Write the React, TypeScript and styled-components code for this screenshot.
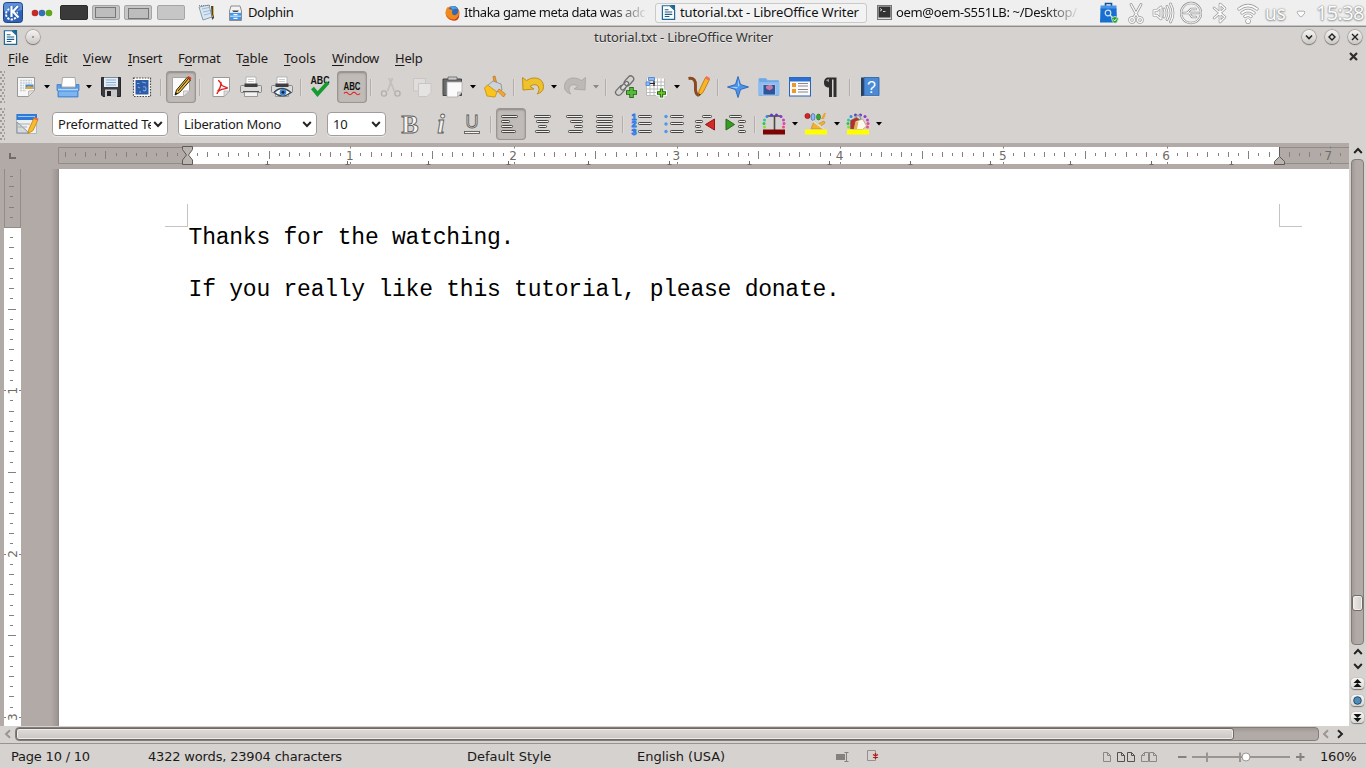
import React from "react";
import styled, { createGlobalStyle, css } from "styled-components";

const sans = `"Noto Sans", "Open Sans", sans-serif`;

const Global = createGlobalStyle`
  * { box-sizing: border-box; }
  body { margin: 0; overflow: hidden; background: #d6d2cf; font: 13px ${sans}; color: #1c1a19; }
  svg { display: block; flex: none; }
`;

const Screen = styled.div`
  width: 1366px;
  height: 768px;
  display: flex;
  flex-direction: column;
  overflow: hidden;
`;

/* ---------- desktop panel ---------- */
const Panel = styled.header`
  height: 27px;
  flex: none;
  display: flex;
  align-items: center;
  padding: 0 0 1px 3px;
  background: #efefef;
  border-bottom: 1px solid #8e8c8a;
  box-shadow: inset 0 -1px #c6c5c4;
`;
const PanelItem = styled.div<{ $gap?: number; $w: number }>`
  flex: none;
  display: flex;
  align-items: center;
  justify-content: center;
  height: 25px;
  width: ${(p) => p.$w}px;
  margin-left: ${(p) => p.$gap ?? 0}px;
`;
const Desk = styled.div<{ $tone?: string; $gap?: number }>`
  flex: none;
  width: 28px;
  height: 15px;
  margin-left: ${(p) => p.$gap ?? 4}px;
  border-radius: 2px;
  border: 1px solid ${(p) => (p.$tone ? "#2c2c2c" : "#a5a5a5")};
  background: ${(p) => p.$tone ?? "#c6c6c6"};
  padding: 1px 2px;
`;
const DeskWindow = styled.div<{ $low?: boolean }>`
  height: 11px;
  width: 21px;
  margin-top: ${(p) => (p.$low ? 1 : 0)}px;
  margin-left: ${(p) => (p.$low ? 1 : 0)}px;
  border: 1px solid #777;
  background: #bdbdbd;
`;
const PanelText = styled.span<{ $w: number; $gap: number; $ls?: number; $fade?: boolean }>`
  flex: none;
  width: ${(p) => p.$w}px;
  margin-left: ${(p) => p.$gap}px;
  margin-top: -1px;
  overflow: hidden;
  white-space: nowrap;
  font-size: 13px;
  line-height: 20px;
  color: #111;
  letter-spacing: ${(p) => p.$ls ?? 0}px;
  ${(p) =>
    p.$fade &&
    css`
      mask-image: linear-gradient(90deg, #000 82%, transparent 102%);
    `}
`;
const ActiveTask = styled.div`
  flex: none;
  display: flex;
  align-items: center;
  width: 212px;
  height: 20px;
  margin-left: 10px;
  padding-left: 5px;
  border: 1px solid #c9c9c9;
  border-radius: 3px;
  background: #f3f3f3;
`;
const TrayText = styled.span<{ $w: number; $size: number; $gap: number; $ls?: number }>`
  flex: none;
  width: ${(p) => p.$w}px;
  margin-left: ${(p) => p.$gap}px;
  font-size: ${(p) => p.$size}px;
  line-height: 24px;
  letter-spacing: ${(p) => p.$ls ?? 0}px;
  white-space: nowrap;
  color: #fdfdfd;
  text-shadow: 0 0 1px #888, 0 0 2px #999, 0 1px 2px #999;
`;

/* ---------- title and menu ---------- */
const TitleBar = styled.div`
  height: 20px;
  flex: none;
  display: grid;
  grid-template-columns: 60px 1fr 60px;
  align-items: center;
  padding: 0 4px 0 3px;
`;
const TitleIcons = styled.div<{ $gap: number; $end?: boolean }>`
  display: flex;
  align-items: center;
  gap: ${(p) => p.$gap}px;
  justify-content: ${(p) => (p.$end ? "flex-end" : "flex-start")};
`;
const Title = styled.div`
  text-align: center;
  padding-left: 2px;
  color: #333;
  text-shadow: 0 1px #eee;
  letter-spacing: -0.14px;
  line-height: 18px;
`;
const RoundButton = styled.div`
  width: 14px;
  height: 14px;
  flex: none;
  border-radius: 50%;
  display: grid;
  place-items: center;
  background: linear-gradient(#f5f4f3, #cbc7c4);
  box-shadow: 0 0 1px 0.5px #827e7b, 0 1px 1px #76726f;
`;
const MenuBar = styled.nav`
  height: 22px;
  flex: none;
  display: flex;
  align-items: center;
  gap: 16px;
  padding: 0 8px 1px 8px;
`;
const MenuItem = styled.span<{ $w: number; $ls?: number }>`
  width: ${(p) => p.$w}px;
  flex: none;
  white-space: nowrap;
  line-height: 20px;
  letter-spacing: ${(p) => p.$ls ?? 0}px;
  u { text-underline-offset: 2px; }
`;
const Spacer = styled.div`
  flex: 1;
`;

/* ---------- toolbars ---------- */
const ToolRow = styled.div<{ $h: number }>`
  height: ${(p) => p.$h}px;
  flex: none;
  display: flex;
  align-items: center;
`;
const Grip = styled.div`
  width: 5px;
  height: 32px;
  margin-right: 7px;
  background: radial-gradient(circle at 1px 1px, #a09b98 0.8px, transparent 1.1px) 0 0 / 4px 6px,
    radial-gradient(circle at 1px 1px, #a09b98 0.8px, transparent 1.1px) 2px 3px / 4px 6px;
`;
const Tool = styled.div<{ $gap?: number; $on?: boolean }>`
  flex: none;
  width: 28px;
  height: 30px;
  margin-left: ${(p) => p.$gap ?? 0}px;
  display: grid;
  place-items: center;
  border-radius: 3px;
  ${(p) =>
    p.$on &&
    css`
      background: #c0bbb7;
      box-shadow: 0 0 0 1px #9a9592, inset 0 1px 2px #8d8885;
    `}
`;
const Sep = styled.div<{ $gap?: number }>`
  flex: none;
  width: 2px;
  height: 17px;
  margin-left: ${(p) => p.$gap ?? 4}px;
  border-left: 1px solid #b3aeab;
  border-right: 1px solid #dedbd9;
`;
const DropBox = styled.div`
  flex: none;
  width: 14px;
  display: grid;
  place-items: center;
`;
const Combo = styled.div<{ $w: number; $gap: number }>`
  flex: none;
  width: ${(p) => p.$w}px;
  margin-left: ${(p) => p.$gap}px;
  height: 24px;
  display: flex;
  align-items: center;
  justify-content: space-between;
  padding: 0 4px 0 5px;
  background: #fff;
  border: 1px solid #a29d9a;
  border-radius: 4px;
  box-shadow: 0 1px #e6e4e2;
`;
const ComboText = styled.span<{ $ls?: number }>`
  flex: 1;
  overflow: hidden;
  white-space: nowrap;
  line-height: 20px;
  margin-right: 2px;
  letter-spacing: ${(p) => p.$ls ?? 0}px;
`;

/* ---------- work area ---------- */
const Work = styled.main`
  flex: none;
  height: 583px;
  display: flex;
`;
const Canvas = styled.div`
  width: 1349px;
  display: flex;
  flex-direction: column;
  background: #b2aaa6;
`;
const RulerRow = styled.div`
  height: 26px;
  flex: none;
`;
const DocRow = styled.div`
  flex: 1;
  display: flex;
`;
const Desktop = styled.div`
  width: 37px;
  background: linear-gradient(90deg, transparent 30px, #9b9490 37px);
`;
const Page = styled.article`
  position: relative;
  flex: 1;
  border-left: 1px solid #918b87;
  background: #fff;
  padding: 56px 0 0 129.6px;
`;
const Line = styled.p`
  margin: 0;
  height: 26px;
  font: 23px/26px "Liberation Mono", monospace;
  letter-spacing: -0.24px;
  color: #000;
  white-space: pre;
`;
const Corner = styled.i<{ $x: number; $side: "left" | "right" }>`
  position: absolute;
  left: ${(p) => p.$x}px;
  top: 35px;
  width: 23px;
  height: 23px;
  border-bottom: 1px solid #c4c4c4;
  border-${(p) => p.$side}: 1px solid #c4c4c4;
`;
const VScroll = styled.aside`
  width: 17px;
  display: flex;
  flex-direction: column;
  align-items: center;
  background: #d6d2cf;
`;
const VTrack = styled.div`
  width: 13px;
  height: 486px;
  flex: none;
  border-radius: 4px;
  border: 1px solid #827d79;
  background: linear-gradient(90deg, #a19a96, #b2aaa6 40%);
  padding-top: 435px;
`;
const VThumb = styled.div`
  width: 11px;
  height: 16px;
  border-radius: 3px;
  border: 1px solid #716c69;
  background: linear-gradient(90deg, #eceae8, #d2cecb);
  box-shadow: inset 0 0 0 1px #f2f1f0;
`;
const PillButton = styled.div<{ $gap: number }>`
  width: 13px;
  height: 11px;
  flex: none;
  margin-top: ${(p) => p.$gap}px;
  display: grid;
  place-items: center;
  border-radius: 4px;
  background: linear-gradient(#f7f6f5, #d8d5d2);
  box-shadow: 0 1px 1px #77726f, 0 0 1px #77726f;
`;
const ArrowSlot = styled.div<{ $w?: number; $h?: number }>`
  width: ${(p) => p.$w ?? 13}px;
  height: ${(p) => p.$h ?? 14}px;
  flex: none;
  display: grid;
  place-items: center;
`;
const HScroll = styled.div`
  height: 17px;
  flex: none;
  display: flex;
  align-items: center;
  padding-bottom: 1px;
`;
const HTrack = styled.div`
  width: 1304px;
  height: 14px;
  border-radius: 4px;
  border: 1px solid #827d79;
  background: linear-gradient(#9e9793, #b2aaa6 40%);
`;
const HThumb = styled.div`
  width: 1218px;
  height: 12px;
  border-radius: 3px;
  border: 1px solid #6e6966;
  background: linear-gradient(#dedbd9, #cac6c2);
  box-shadow: inset 0 0 0 1px #efedeb;
`;
const StatusBar = styled.footer`
  flex: none;
  height: 25px;
  display: flex;
  align-items: center;
  border-top: 1px solid #989390;
  padding: 0 0 0 11px;
`;
const StatusText = styled.span<{ $w: number; $ls?: number }>`
  flex: none;
  display: block;
  width: ${(p) => p.$w}px;
  padding-top: 2px;
  white-space: nowrap;
  font-family: "DejaVu Sans", sans-serif;
  line-height: 20px;
  letter-spacing: ${(p) => p.$ls ?? 0}px;
`;
const StatusIcon = styled.div<{ $gap: number }>`
  flex: none;
  margin-left: ${(p) => p.$gap}px;
`;

/* ---------- drawings ---------- */
const Icon = ({ children, size = 24 }: { children: React.ReactNode; size?: number }) => (
  <svg width={size} height={size} viewBox="0 0 24 24" fill="none">
    {children}
  </svg>
);

const Drop = ({ dim }: { dim?: boolean }) => (
  <DropBox>
    <svg width="6" height="4">
      <path d="M0 0h6L3 3.6Z" fill={dim ? "#8d8986" : "#000"} />
    </svg>
  </DropBox>
);

const Chevron = ({ dir, color = "#222", size = 10 }: { dir: "up" | "down" | "left" | "right"; color?: string; size?: number }) => {
  const turn = { down: 0, left: 90, up: 180, right: 270 }[dir];
  return (
    <svg width={size} height={size} viewBox="0 0 10 10">
      <path d="M1.200 3 5 7l3.800-4" transform={`rotate(${turn} 5 5)`} fill="none" stroke={color} strokeWidth="1.900" />
    </svg>
  );
};

const WriterIcon = ({ size = 16 }: { size?: number }) => (
  <svg width={size} height={size} viewBox="0 0 16 16">
    <path d="M1.500.8h8L14.500 5.500v9.800h-13z" fill="#fff" stroke="#1f6a97" strokeWidth="1.300" />
    <path d="M9.500 0H15v6z" fill="#1a6795" />
    <path d="M4 5h4M4 7.500h8M4 10h8M4 12.300h5" stroke="#1d5d88" strokeWidth="1.200" />
  </svg>
);

const Bars = ({ rows }: { rows: [number, number, number][] }) => (
  <>
    {rows.map(([x, y, w], i) => (
      <rect key={i} x={x + 0.5} y={y + 0.5} width={w - 1} height="2" rx="0.8" fill="#f0f0f0" stroke="#484644" strokeWidth="1" />
    ))}
  </>
);

const dotRing = [
  ["#7fe03c", 2.5, 15], ["#2ec44b", 2, 11.5], ["#2fc9a0", 2.5, 8], ["#3b8bd8", 5, 4.5], ["#4f43c9", 9.5, 3],
  ["#6a36c4", 14.5, 3], ["#8a3cc8", 19, 4.5], ["#b94ac5", 21.5, 8], ["#d94aa5", 22, 11.5], ["#ee4b8a", 21.5, 15],
] as const;
const Ring = () => (
  <>
    {dotRing.map(([c, x, y], i) => (
      <circle key={i} cx={x} cy={y} r="1.500" fill={c} />
    ))}
  </>
);

const NewDoc = () => (
  <Icon>
    <path d="M3.500 2.500h17v13l-6 6h-11z" fill="#f7f7f7" stroke="#999" />
    <path d="M14.500 21.500v-5.500l6-.5z" fill="#ddd" stroke="#aaa" strokeWidth=".7" />
    <path d="M6 5.500h12M6 8h12M6 10.500h4M6 13h4M6 15.500h6" stroke="#c5ccd2" strokeWidth="1.300" strokeDasharray="2 .7" />
    <rect x="11.500" y="9.500" width="8" height="4.500" fill="#3c8ed3" />
    <path d="M11.500 14v-1.500l3-1.500 5 1v2z" fill="#e0a63d" />
  </Icon>
);
const OpenIcon = () => (
  <Icon>
    <path d="M5.500 12 6.500 2.500h12.500l1 9.500z" fill="#fff" stroke="#999" strokeWidth=".8" />
    <path d="M1 9.500h4v3.500h15V9.500h3v6h-1V22H2v-6.500H1z" fill="#5c9fe6" stroke="#3f7fc8" strokeWidth=".8" />
    <path d="M2 14.500h20" stroke="#b8d8fa" strokeWidth="1.500" />
    <path d="M3 17h18v4H3z" fill="#7db5f0" />
  </Icon>
);
const SaveIcon = () => (
  <Icon>
    <path d="M2.500 2.500h19v19H4l-1.500-1.500z" fill="#3b3b40" stroke="#26262a" />
    <path d="M5 2.500h14v9.500H5z" fill="#e2ecf7" />
    <path d="M7 5h10M7 7.500h10M7 10h10" stroke="#8aaed8" />
    <path d="M6 14.500h12V22H6z" fill="#c9c9cb" />
    <path d="M8 16h4v5H8z" fill="#222" />
  </Icon>
);
const StampIcon = () => (
  <Icon>
    <rect x="3.500" y="3" width="17" height="18.500" fill="#fff" stroke="#4a4a4a" strokeWidth="1.200" strokeDasharray="1.600 1.200" />
    <rect x="5.500" y="5" width="13" height="14.500" fill="#2c5ba8" />
    <path d="M7 8.500h2.500M12 7l4 1M8 12l2 1M13 12q3-1 3 2t-3 1M9 17h2" stroke="#7ea6e0" strokeWidth="1.200" />
  </Icon>
);
const EditIcon = () => (
  <Icon>
    <path d="M3.500 2.500h17v13l-6 6h-11z" fill="#fbfbfb" stroke="#a5a5a5" />
    <path d="M14.500 21.500v-5.500h6z" fill="#e3e3e3" stroke="#aaa" strokeWidth=".7" />
    <path d="m6 20 1.500-5L18 2.500l3.500 2.500L10.500 17.500z" fill="#f2bb2a" stroke="#222" strokeWidth="1" />
    <path d="M9 16 19.500 3.500" stroke="#222" strokeWidth="1" />
    <path d="M18 2.500 19.500 1l3 2-1 2z" fill="#d8322a" />
    <path d="m6 20 .8-2.800 1.700 1.300z" fill="#111" />
  </Icon>
);
const PdfIcon = () => (
  <Icon>
    <path d="M4 2.500h16.500v13.500L15 21.500H4z" fill="#fdfdfd" stroke="#999" />
    <path d="M15 21.500V16h5.500z" fill="#ddd" stroke="#aaa" strokeWidth=".7" />
    <path d="M9 5.500c2 0 2.500 3 4 5 2 1.500 5.500 1.800 5.500 2.500s-5 .5-8 2.500c-1.500 1-2.500 3-2.500 3.500M12 7c0 4-1 7-3.500 9.500" stroke="#e02222" strokeWidth="1.400" />
  </Icon>
);
const Printer = ({ eye }: { eye?: boolean }) => (
  <Icon>
    <path d="M7 10V2h10v8z" fill="#fff" stroke="#aaa" strokeWidth=".8" />
    <path d="M9 4.500h6M9 6.500h6" stroke="#ccc" />
    <rect x="1.500" y="10.500" width="21" height="7" rx="1" fill="#dcdcdc" stroke="#777" strokeWidth=".8" />
    <path d="M5.500 8.500h13v3.500h-13z" fill="#3f3f3f" />
    <path d="M5.500 17h13v4.500h-13z" fill="#f1f1f1" stroke="#888" strokeWidth=".8" />
    <path d="M4 16.500h16" stroke="#555" />
    {eye && (
      <>
        <path d="M4 17.500q7.500-8 17 0-9 7-17 0" fill="#f4f7fa" stroke="#3b4a58" strokeWidth="1.200" />
        <circle cx="13" cy="17.300" r="3.300" fill="#3e86cf" />
        <circle cx="13" cy="17.300" r="1.400" fill="#102436" />
      </>
    )}
  </Icon>
);
const Abc = ({ check }: { check?: boolean }) => (
  <svg width="24" height="24" viewBox="0 0 24 24">
    <text x="12" y={check ? 8.5 : 15} textAnchor="middle" textLength={check ? 19 : 17} lengthAdjust="spacingAndGlyphs" fontFamily="Liberation Sans, sans-serif" fontSize={check ? 10.5 : 11} fontWeight="bold" fill="#111">
      ABC
    </text>
    {check ? (
      <path d="m4.500 13 5 6L20 7.500" fill="none" stroke="#169b30" strokeWidth="3.800" />
    ) : (
      <path d="M4 18.500q2-2.500 4 0t4 0 4 0 4 0" fill="none" stroke="#e41c1c" strokeWidth="1.100" />
    )}
  </svg>
);
const CutIcon = () => (
  <Icon>
    <path d="m10 3 5.500 13.500M13.500 3 8.500 16" stroke="#c3bfbc" strokeWidth="1.800" />
    <circle cx="5" cy="18.500" r="2.600" stroke="#b4b0ad" strokeWidth="1.400" />
    <circle cx="18.500" cy="18.500" r="2.600" stroke="#b4b0ad" strokeWidth="1.400" />
  </Icon>
);
const CopyIcon = () => (
  <Icon>
    <path d="M3.500 3.500h12V16h-12z" fill="#dfdcda" stroke="#c9c5c2" />
    <path d="M8.500 8.500h12.500v9l-4 4H8.500z" fill="#e5e3e1" stroke="#c9c5c2" />
  </Icon>
);
const PasteIcon = () => (
  <Icon>
    <path d="M3 4h18.500v16.500H3z" fill="#6b6b6b" stroke="#444" />
    <path d="M8 2h9v3H8z" fill="#ccc" stroke="#555" strokeWidth=".7" />
    <path d="M7 7h15v10l-4.500 5h-10.500z" fill="#fafafa" stroke="#aaa" strokeWidth=".8" />
    <path d="M17.500 22v-5H22z" fill="#ddd" stroke="#aaa" strokeWidth=".6" />
  </Icon>
);
const BrushIcon = () => (
  <Icon>
    <path d="m10 1.500 2-.5 1.500 6-2.500 1z" fill="#ee9a2d" stroke="#b96a10" strokeWidth=".6" />
    <path d="m4 11 6-5 8 3 1 6-6 2z" fill="#cfd3d8" stroke="#858a90" strokeWidth=".8" />
    <path d="m1.500 13 3-3 9.500 7-2 5-8-1z" fill="#fbc41c" stroke="#c98a0b" strokeWidth=".8" />
    <path d="m16 14 6.500 5-2 3-6-6z" fill="#f4a92b" stroke="#bd7a13" strokeWidth=".7" />
  </Icon>
);
const UndoIcon = () => (
  <Icon>
    <path d="M5.500 5.500C13 .5 22.500 3 22.500 11.500c0 4-2 6-6.500 7.500 2-2 2.500-4.500 1.500-7-1.500-3-5-3-8.500-.5l4 2.500-11 1L1.500 2.500z" fill="#efc12a" stroke="#b78a10" strokeWidth=".9" />
  </Icon>
);
const RedoIcon = () => (
  <Icon>
    <path d="M18.500 5.500C11 .5 1.500 3 1.500 11.500c0 4 2 6 6.500 7.500-2-2-2.500-4.500-1.500-7 1.500-3 5-3 8.500-.5l-4 2.500 11 1 .5-12.500z" fill="#bcbab8" stroke="#a9a6a4" strokeWidth=".9" />
  </Icon>
);
const LinkIcon = () => (
  <Icon>
    <g transform="rotate(-48 11 11)" stroke="#707070" strokeWidth="1.300">
      <rect x="-1" y="7.500" width="11" height="6" rx="3" />
      <rect x="6" y="8.500" width="10" height="4" rx="2" fill="#ddd" />
      <rect x="12" y="7.500" width="11" height="6" rx="3" />
    </g>
    <path d="M12 17.500h11M17.500 12v11" stroke="#17610a" strokeWidth="4.400" />
    <path d="M12.800 17.500h9.400M17.500 12.800v9.400" stroke="#57b83a" strokeWidth="2.800" />
  </Icon>
);
const TableIcon = () => (
  <Icon>
    <path d="M2.500 3.500h18v17h-18z" fill="#fff" />
    <path d="M2.500 7h18M2.500 10.500h18M2.500 14h18M2.500 17.500h18M2.500 20.500h18M6 3.500v17M10 3.500v17M13.500 3.500v17M17 3.500v17M2.500 3.500v17M20.500 3.500v17" stroke="#bcbcbc" />
    <path d="M4.500 2.500h6v3h-6zM2 7h3.500v3.500H2z" fill="#8ebcf6" stroke="#4e86d6" strokeWidth=".9" />
    <path d="M6 8.500h5M10 6v5" stroke="#222" strokeWidth="1.200" />
    <path d="M12 18h11M17.500 12.500v11" stroke="#fff" strokeWidth="5.500" />
    <path d="M13 18h9M17.500 13.500v9" stroke="#17610a" strokeWidth="3.400" />
    <path d="M13.800 18h7.400M17.500 14.300v7.400" stroke="#7ad032" strokeWidth="1.500" />
  </Icon>
);
const PenIcon = () => (
  <Icon>
    <path d="M1.500 3.500C7 2.500 9 6 8.500 11c-.3 5 0 8 2.500 9 2.500-1 3-4 3.500-6" stroke="#8a4a20" strokeWidth="3" />
    <path d="m11.500 21 .5-5L18.500 2.500l4 2-6.500 13z" fill="#f8b526" stroke="#c17a10" strokeWidth=".9" />
    <path d="m18 3.500 1.300-2.500 3.700 2-1 2.500z" fill="#f0705c" />
    <path d="m11.500 21 .4-2.500 1.900 1z" fill="#333" />
  </Icon>
);
const StarIcon = () => (
  <Icon>
    <path d="m12 1.500 2.500 8 8 2.500-8 2.500-2.500 8-2.500-8-8-2.500 8-2.500z" fill="#4b93ec" stroke="#2763b8" strokeWidth=".9" />
    <path d="m12 4 1.500 6.500L12 12zM4 12h8l-1.500 1.500z" fill="#a9d0fb" />
  </Icon>
);
const GalleryIcon = () => (
  <Icon>
    <path d="M2 3.500h7l1.500 2H21.500v15H2z" fill="#6ea7e6" stroke="#7fb0e8" />
    <path d="M1.500 7h21V20h-21z" fill="#8abcf2" />
    <path d="M6 9.500h12.500V20H6z" fill="#2f5597" stroke="#b9d3f0" strokeWidth=".8" />
    <path d="M12 19v-4c-4-1-4-5-1-4.500 3-1.500 6.500 1 4 3.500l-3 1.500z" fill="#c77aa8" />
  </Icon>
);
const ListIcon = () => (
  <Icon>
    <rect x="1.500" y="2.500" width="21" height="18.500" fill="#fafafa" stroke="#2a62b8" />
    <path d="M1.500 2.500h21v4h-21z" fill="#2b6fd3" />
    <path d="M4 8h4v4H4zM4 14h4v4H4z" fill="#f2952a" />
    <path d="M10 8.500h10M10 11h10M10 14.500h10M10 17h10" stroke="#888" strokeWidth="1.100" />
  </Icon>
);
const PilcrowIcon = () => (
  <Icon>
    <path d="M10 2.500h8.500V22h-3V4.500h-1.500V22h-3v-9.500C7 12.500 6 10 6 7.500S7.500 2.500 10 2.500" fill="#2e2e2e" />
    <path d="M8 5.500q1-1.500 3-1.500v3z" fill="#999" />
  </Icon>
);
const HelpIcon = () => (
  <svg width="24" height="24" viewBox="0 0 24 24">
    <path d="M3 2.500h3v19H3z" fill="#27405c" />
    <path d="M6 2.500h15v18H6z" fill="#4a8bd8" stroke="#2a5c9e" strokeWidth=".8" />
    <path d="M3.500 21.500h17" stroke="#ddd" strokeWidth="1.200" />
    <text x="13.500" y="17.500" textAnchor="middle" fontFamily="Liberation Sans, sans-serif" fontSize="16" fill="#fff">?</text>
  </svg>
);
const StylesIcon = () => (
  <Icon>
    <path d="M1.500 2.500h20v19h-20z" fill="#eef0f2" stroke="#9aa" strokeWidth=".7" />
    <path d="M1.500 2h20.500v6h-20.500z" fill="#2f7ad8" />
    <path d="M3 4.500h17" stroke="#9cc8ff" />
    <path d="M2 10v11h12z" fill="#d5d9dd" stroke="#8a9098" />
    <path d="M3 12h12M3 15h9" stroke="#a9afb5" />
    <path d="m13 21.500 1-4.500L19 6l4 1.500-5 11z" fill="#f9bd2c" stroke="#c9860f" strokeWidth=".9" />
    <path d="m18.500 7 .8-2 4 1.500-.8 2z" fill="#e86a50" />
  </Icon>
);
const Letter = ({ kind }: { kind: "B" | "i" | "U" }) => (
  <svg width="24" height="26" viewBox="0 0 24 26">
    <text
      x="12" y={kind === "U" ? 17 : 21.5} textAnchor="middle"
      fontFamily={kind === "U" ? "Liberation Sans, sans-serif" : "Liberation Serif, serif"}
      fontSize={kind === "U" ? 18 : kind === "i" ? 27 : 26}
      fontWeight={kind === "U" ? "normal" : "bold"}
      fontStyle={kind === "i" ? "italic" : "normal"}
      fill="#f4f4f4" stroke="#5e5c5a" strokeWidth=".9"
    >
      {kind}
    </text>
    {kind === "U" && <rect x="4.500" y="20.500" width="15" height="2" fill="#f4f4f4" stroke="#5e5c5a" strokeWidth=".9" />}
  </svg>
);
const alignments: Record<string, [number, number, number][]> = {
  left: [[2, 3, 17], [2, 8, 9], [2, 13, 12], [2, 18, 15]],
  center: [[3, 3, 17], [5, 8, 13], [7, 13, 9], [4, 18, 15]],
  right: [[4, 3, 17], [8, 8, 13], [12, 13, 9], [6, 18, 15]],
  justify: [[4, 3, 17], [4, 8, 17], [4, 13, 17], [4, 18, 17]],
};
const Align = ({ kind }: { kind: string }) => (
  <Icon>
    <Bars rows={alignments[kind]} />
  </Icon>
);
const ListMark = ({ numbered }: { numbered?: boolean }) => (
  <svg width="24" height="24" viewBox="0 0 24 24">
    {[4.5, 12, 19.5].map((y, i) =>
      numbered ? (
        <text key={y} x="1.500" y={y + 3.2} fontFamily="Liberation Sans, sans-serif" fontSize="9" fontWeight="bold" fill="#5ca4fa" stroke="#2c78e4" strokeWidth=".8">
          {i + 1}
        </text>
      ) : (
        <circle key={y} cx="4" cy={y} r="1.700" fill="#4c97f2" />
      )
    )}
    <Bars rows={[[8, 3, 14], [8, 10, 14], [8, 18, 14]]} />
  </svg>
);
const Indent = ({ more }: { more?: boolean }) => (
  <Icon>
    {more ? (
      <>
        <Bars rows={[[5, 3, 13], [14, 8, 8], [14, 13, 6], [14, 18, 8]]} />
        <path d="M2 7v11l8.500-5.500z" fill="#3a9a28" stroke="#1f6d13" />
      </>
    ) : (
      <>
        <Bars rows={[[9, 3, 10], [2, 8, 8], [2, 13, 6], [2, 18, 8]]} />
        <path d="M21.500 7v11L12.500 12.500z" fill="#d42a24" stroke="#951512" />
      </>
    )}
  </Icon>
);
const FontColor = () => (
  <Icon>
    <path d="M5 4h14M12.500 4v15" stroke="#4a4a4a" strokeWidth="1.600" />
    <Ring />
    <rect x="1" y="17.500" width="22" height="5" fill="#7d0404" />
  </Icon>
);
const Highlight = () => (
  <Icon>
    <circle cx="3.500" cy="4" r="2.600" fill="#d22" stroke="#811" strokeWidth=".6" />
    <ellipse cx="9" cy="5" rx="2" ry="3.500" fill="#8bbcf5" stroke="#2756a0" strokeWidth=".6" />
    <ellipse cx="14.500" cy="5" rx="2" ry="3" fill="#3ba832" stroke="#1a6914" strokeWidth=".6" />
    <path d="m17 7 3-6h2l-2 6z" fill="#f1a22c" />
    <path d="m7 17 3-8 4 3 6-3 1 2-4 3 3 3z" fill="#f3b22c" stroke="#b98a40" strokeWidth=".7" />
    <path d="m9 9 11 8" stroke="#ddd" strokeWidth="2" />
    <rect x="1" y="17.500" width="22" height="5" fill="#ffff00" />
  </Icon>
);
const Background = () => (
  <Icon>
    <Ring />
    <path d="m4.500 8.500 6-3 3 2-4 9.500H4.500z" fill="#b5302a" stroke="#666" strokeWidth=".6" />
    <path d="M9 6q2-4 5-2l1 4" stroke="#999" strokeWidth="1.500" />
    <path d="m9.500 9.500 7-2.500 4 7-4 3.500H8z" fill="#fbf8f0" stroke="#a68b5c" strokeWidth=".6" />
    <path d="m9.500 10.500 3-1-1.500 7.500H8z" fill="#e2b35a" />
    <rect x="1" y="17.500" width="22" height="5" fill="#ffff00" />
  </Icon>
);

const INCH = 163.25;
const tickLen = (i: number, lens: number[]) => (i % 8 === 0 ? lens[2] : i % 2 === 0 ? lens[1] : lens[0]);

const HRuler = () => {
  const zero = 187.5;
  const ticks: React.ReactNode[] = [];
  for (let i = -12; i <= 114; i++) {
    if (i === 0) continue;
    const x = Math.floor(zero + (i * INCH) / 16) + 0.5;
    if (x > 1345) break;
    if (i > 0 && i % 16 === 0) {
      ticks.push(<path key={i} d={`M${x} 3.500v2M${x} 19v2`} stroke="#85807d" />);
      continue;
    }
    const len = tickLen(i, [3, 5, 8]);
    ticks.push(<path key={i} d={`M${x} ${i % 8 === 0 ? 8 : i % 2 === 0 ? 9 : 10}v${len}`} stroke="#85807d" />);
  }
  return (
    <svg width="1349" height="26">
      <path d="M10 10v5H16" fill="none" stroke="#716c69" strokeWidth="2" />
      <rect x="187" y="4" width="1092" height="17" fill="#fff" />
      <path d="M187 4.500H58.500v16H187M1279.500 20.500H1349M1279 4.500H1349" fill="none" stroke="#928c88" />
      {ticks}
      {[1, 2, 3, 4, 5, 6, 7].map((n) => (
        <text key={n} x={186.5 + n * INCH - (n === 7 ? 1 : 0)} y="17" textAnchor="middle" fontFamily="DejaVu Sans, sans-serif" fontSize="12" fill="#6f6a67">
          {n}
        </text>
      ))}
      {Array.from({ length: 13 }, (_, i) => {
        const x = Math.floor(187 + (i + 1) * 80.35) + 0.5;
        return <path key={i} d={`M${x} 18v3.500M${x - 2} 21.500h4`} stroke="#6f6a67" />;
      })}
      <path d="M182.500 3.500h10v3l-4 5.500 4 5v4.500h-10V17l4-5-4-5.500z" fill="#bbb5b1" stroke="#5f5a57" />
      <path d="M1279.500 13.500l5 5v3h-10v-3zM1279.500 4v9.500" fill="#bbb5b1" stroke="#5f5a57" />
    </svg>
  );
};

const VRuler = () => {
  const zero = 58.5;
  const ticks: React.ReactNode[] = [];
  for (let i = -5; i <= 48; i++) {
    if (i === 0) continue;
    const y = Math.floor(zero + (i * INCH) / 16) + 0.5;
    if (i > 0 && i % 16 === 0) {
      ticks.push(<path key={i} d={`M4 ${y}h2M19 ${y}h2`} stroke="#85807d" />);
      continue;
    }
    const len = tickLen(i, [3, 5, 8]);
    ticks.push(<path key={i} d={`M${i % 8 === 0 ? 8 : i % 2 === 0 ? 9 : 10} ${y}h${len}`} stroke="#85807d" />);
  }
  return (
    <svg width="21" height="557">
      <rect x="4" y="59" width="17" height="498" fill="#fff" />
      <path d="M4.500 0v58.500h16V0" fill="none" stroke="#928c88" />
      {ticks}
      {[1, 2, 3].map((n) => (
        <text key={n} transform={`translate(17 ${zero + n * INCH}) rotate(-90)`} textAnchor="middle" fontFamily="DejaVu Sans, sans-serif" fontSize="12" fill="#6f6a67">
          {n}
        </text>
      ))}
    </svg>
  );
};

const KdeIcon = () => (
  <svg width="20" height="21" viewBox="0 0 20 21">
    <rect x=".5" y=".5" width="19" height="20" rx="3" fill="#2f62b4" stroke="#1d4588" />
    <path d="M1 4q0-3 3-3h12q3 0 3 3v4Q10 11 1 9z" fill="#5f8fd6" />
    <circle cx="8.500" cy="12" r="5.500" fill="none" stroke="#fff" strokeWidth="2" strokeDasharray="2.300 1.200" />
    <path d="M8.500 4v11M15.500 4 10 9.500l5.500 6" stroke="#2f62b4" strokeWidth="4" fill="none" />
    <path d="M8.500 4v11M15 4l-5 5.500 5.500 6" stroke="#fff" strokeWidth="2.200" fill="none" />
  </svg>
);
const NotebookIcon = () => (
  <svg width="18" height="17" viewBox="0 0 18 17">
    <path d="M1 3 11 1l3 12-9 3z" fill="#d7e6f5" stroke="#8e9aa6" />
    <path d="m4 5 7-1.500M5 8l7-1.500M6 11l6-1.500" stroke="#9fb8d2" />
    <path d="M13 2h3v12l-2 2z" fill="#444" />
    <path d="M15.500 2v8l-1 3" stroke="#e6b73d" fill="none" />
    <path d="M1 1.500h11" stroke="#888" strokeDasharray="1 1" />
  </svg>
);
const DolphinIcon = () => (
  <svg width="15" height="16" viewBox="0 0 15 16">
    <path d="M1.500 6 3 1h9l1.500 5v9.500h-12z" fill="#f3f3f3" stroke="#8c8c8c" />
    <path d="M2 7.500h11V15H2z" fill="#4595e6" />
    <path d="M2 7.500h11M2 11.200h11" stroke="#d5e9fc" />
    <path d="M5.500 9h4v1.300h-4zM5.500 12.700h4V14h-4z" fill="#fff" />
    <path d="M4 5.500h7L9.500 7h-4z" fill="#444" />
  </svg>
);
const FirefoxIcon = () => (
  <svg width="15" height="16" viewBox="0 0 15 16">
    <circle cx="7.500" cy="8" r="7" fill="#e86a17" />
    <circle cx="8.500" cy="6" r="5" fill="#3468b4" />
    <path d="M5 2Q9-.5 13 4 9 3 8 5z" fill="#4aa3e2" />
    <path d="M1 5q1-3 2-3 0 2 3 2.500 2 .5 1 2.500 0 4 4 3 2-1 3-5 1 5-2 8.500Q7 17 2.500 13 0 9 1 5" fill="#f08a1c" />
    <path d="M1.500 10q3 5 8 4.500 4-2 4.500-6 1 5-3 7-7 1-9.500-5.500" fill="#cf3a14" />
  </svg>
);
const TerminalIcon = () => (
  <svg width="15" height="15" viewBox="0 0 15 15">
    <rect x=".5" y=".5" width="14" height="14" fill="#ddd" stroke="#777" />
    <rect x="1.500" y="1.500" width="12" height="11" fill="#333" />
    <path d="m3 3.500 2 1.300-2 1.300M6 6.500h2.500" stroke="#ccc" fill="none" />
  </svg>
);
const BagIcon = () => (
  <svg width="20" height="22" viewBox="0 0 20 22">
    <path d="M6.500 4V1.500h6V4" fill="none" stroke="#15508f" strokeWidth="1.600" />
    <path d="M1.500 3.500h16V8h-16z" fill="#4793e8" />
    <path d="M1.500 6.500h16l.5 14H1z" fill="#176fd0" />
    <circle cx="9" cy="11" r="2.800" fill="none" stroke="#cfe6fb" strokeWidth="1.200" />
    <path d="m11 13 2.500 2.500" stroke="#cfe6fb" strokeWidth="1.200" />
    <path d="m16 14.500 3.500 1.200q0 4-3.500 5.800-3.500-1.800-3.500-5.800z" fill="#25a02f" stroke="#fff" strokeWidth=".7" />
    <path d="m14.500 17.500 1.200 1.500 2-2.500" stroke="#fff" fill="none" />
  </svg>
);
const Outline = ({ w, d, core = 1.3 }: { w: number; d: string; core?: number }) => (
  <svg width={w} height="24" viewBox={`0 0 ${w} 24`} fill="none" strokeLinecap="round" strokeLinejoin="round">
    <path d={d} stroke="#999" strokeWidth={core + 1.4} />
    <path d={d} stroke="#fcfcfc" strokeWidth={core} />
  </svg>
);

export default function App() {
  return (
    <Screen>
      <Global />
      <Panel>
        <PanelItem $w={20}><KdeIcon /></PanelItem>
        <PanelItem $w={22} $gap={8}>
          <svg width="22" height="8">
            <circle cx="4" cy="4" r="3.300" fill="#c32a2a" />
            <circle cx="11" cy="4" r="3.300" fill="#3570b5" />
            <circle cx="18" cy="4" r="3.300" fill="#5fa71d" />
          </svg>
        </PanelItem>
        <Desk $tone="#3a3a3a" $gap={7} />
        <Desk><DeskWindow /></Desk>
        <Desk><DeskWindow $low /></Desk>
        <Desk $gap={5} />
        <PanelItem $w={18} $gap={13}><NotebookIcon /></PanelItem>
        <PanelItem $w={15} $gap={12}><DolphinIcon /></PanelItem>
        <PanelText $w={60} $gap={5} $ls={-0.4}>Dolphin</PanelText>
        <PanelItem $w={15} $gap={137}><FirefoxIcon /></PanelItem>
        <PanelText $w={181} $gap={4} $ls={-0.45} $fade>Ithaka game meta data was added</PanelText>
        <ActiveTask>
          <WriterIcon size={15} />
          <PanelText $w={184} $gap={4} $ls={-0.14}>tutorial.txt - LibreOffice Writer</PanelText>
        </ActiveTask>
        <PanelItem $w={15} $gap={10}><TerminalIcon /></PanelItem>
        <PanelText $w={181} $gap={4} $ls={-0.35} $fade>oem@oem-S551LB: ~/Desktop/</PanelText>
        <PanelItem $w={20} $gap={22}><BagIcon /></PanelItem>
        <PanelItem $w={18} $gap={8}><Outline w={18} d="M4 3.500 11.500 17M14 3.500 6.500 17M7.400 19a2.400 2.400 0 1 1-4.800 0 2.400 2.400 0 1 1 4.800 0M15.400 19a2.400 2.400 0 1 1-4.800 0 2.400 2.400 0 1 1 4.800 0" /></PanelItem>
        <PanelItem $w={24} $gap={7}><Outline w={24} d="M2 9.500h3l4-3.500v12l-4-3.500H2zM12 8q2 4 0 8M15 5.500q4 6.500 0 13M18.500 3q5 9 0 18" /></PanelItem>
        <PanelItem $w={22} $gap={4}><Outline w={22} core={1} d="M11 2a10 10 0 1 0 .1 0M3.500 12h15M7 12l4-4h4M9 12l3 4h4M15.500 8h.1" /></PanelItem>
        <PanelItem $w={18} $gap={9}><Outline w={18} core={1.2} d="m3 7 11 9-5 5V3l5 4.500L3 17" /></PanelItem>
        <PanelItem $w={22} $gap={8}><Outline w={22} core={1.8} d="M2 8q9-7 18 0M5 12q6-5 12 0M8 15.500q3-2.500 6 0M11 19a1.200 1.200 0 1 0 .1 0" /></PanelItem>
        <TrayText $w={22} $size={19} $gap={6}>us</TrayText>
        <PanelItem $w={10} $gap={9}><Outline w={10} core={2} d="M2.500 11.500h5l-2.500 3z" /></PanelItem>
        <TrayText $w={52} $size={20} $gap={10} $ls={-0.7}>15:38</TrayText>
      </Panel>

      <TitleBar>
        <TitleIcons $gap={8}>
          <WriterIcon size={15} />
          <RoundButton><svg width="2" height="2"><circle cx="1" cy="1" r="1" fill="#888" /></svg></RoundButton>
        </TitleIcons>
        <Title>tutorial.txt - LibreOffice Writer</Title>
        <TitleIcons $gap={9} $end>
          <RoundButton><Chevron dir="down" size={8} /></RoundButton>
          <RoundButton><svg width="8" height="8"><path d="m4 1 3 3-3 3-3-3z" fill="none" stroke="#222" strokeWidth="1.400" /></svg></RoundButton>
          <RoundButton><svg width="8" height="8"><path d="m1 1 6 6M7 1 1 7" stroke="#222" strokeWidth="1.400" /></svg></RoundButton>
        </TitleIcons>
      </TitleBar>

      <MenuBar>
        <MenuItem $w={21}><u>F</u>ile</MenuItem>
        <MenuItem $w={22} $ls={-0.2}><u>E</u>dit</MenuItem>
        <MenuItem $w={29}><u>V</u>iew</MenuItem>
        <MenuItem $w={34} $ls={-0.3}><u>I</u>nsert</MenuItem>
        <MenuItem $w={42} $ls={-0.3}>F<u>o</u>rmat</MenuItem>
        <MenuItem $w={32}>T<u>a</u>ble</MenuItem>
        <MenuItem $w={32}><u>T</u>ools</MenuItem>
        <MenuItem $w={47} $ls={-0.4}><u>W</u>indow</MenuItem>
        <MenuItem $w={28} $ls={-0.2}><u>H</u>elp</MenuItem>
        <Spacer />
        <svg width="9" height="11"><path d="m1 1 7 7M8 1 1 8" stroke="#2e2c2b" strokeWidth="2.200" /></svg>
      </MenuBar>

      <ToolRow $h={36}>
        <Grip />
        <Tool><NewDoc /></Tool><Drop />
        <Tool><OpenIcon /></Tool><Drop />
        <Tool $gap={1}><SaveIcon /></Tool>
        <Tool $gap={3}><StampIcon /></Tool>
        <Sep />
        <Tool $gap={5} $on><EditIcon /></Tool>
        <Sep />
        <Tool $gap={6}><PdfIcon /></Tool>
        <Tool $gap={2}><Printer /></Tool>
        <Tool $gap={3}><Printer eye /></Tool>
        <Sep />
        <Tool $gap={4}><Abc check /></Tool>
        <Tool $gap={4} $on><Abc /></Tool>
        <Sep />
        <Tool $gap={5}><CutIcon /></Tool>
        <Tool $gap={3}><CopyIcon /></Tool>
        <Tool $gap={2}><PasteIcon /></Tool><Drop />
        <Tool $gap={1}><BrushIcon /></Tool>
        <Sep />
        <Tool $gap={4}><UndoIcon /></Tool><Drop />
        <Tool><RedoIcon /></Tool><Drop dim />
        <Sep $gap={2} />
        <Tool $gap={5}><LinkIcon /></Tool>
        <Tool $gap={2}><TableIcon /></Tool><Drop />
        <Tool $gap={1}><PenIcon /></Tool>
        <Sep />
        <Tool $gap={5}><StarIcon /></Tool>
        <Tool $gap={3}><GalleryIcon /></Tool>
        <Tool $gap={3}><ListIcon /></Tool>
        <Tool $gap={2}><PilcrowIcon /></Tool>
        <Sep $gap={5} />
        <Tool $gap={5}><HelpIcon /></Tool>
      </ToolRow>

      <ToolRow $h={38}>
        <Grip />
        <Tool $gap={1}><StylesIcon /></Tool>
        <Combo $w={116} $gap={11}><ComboText $ls={-0.18}>Preformatted Text</ComboText><Chevron dir="down" /></Combo>
        <Combo $w={139} $gap={10}><ComboText $ls={-0.25}>Liberation Mono</ComboText><Chevron dir="down" /></Combo>
        <Combo $w={59} $gap={10}><ComboText $ls={-0.2}>10</ComboText><Chevron dir="down" /></Combo>
        <Tool $gap={10}><Letter kind="B" /></Tool>
        <Tool $gap={3}><Letter kind="i" /></Tool>
        <Tool $gap={3}><Letter kind="U" /></Tool>
        <Sep />
        <Tool $gap={5} $on><Align kind="left" /></Tool>
        <Tool $gap={4}><Align kind="center" /></Tool>
        <Tool $gap={3}><Align kind="right" /></Tool>
        <Tool $gap={2}><Align kind="justify" /></Tool>
        <Sep />
        <Tool $gap={4}><ListMark numbered /></Tool>
        <Tool $gap={4}><ListMark /></Tool>
        <Tool $gap={3}><Indent /></Tool>
        <Tool $gap={3}><Indent more /></Tool>
        <Sep />
        <Tool $gap={4}><FontColor /></Tool><Drop />
        <Tool><Highlight /></Tool><Drop />
        <Tool><Background /></Tool><Drop />
      </ToolRow>

      <Work>
        <Canvas>
          <RulerRow><HRuler /></RulerRow>
          <DocRow>
            <VRuler />
            <Desktop />
            <Page>
              <Corner $x={106} $side="right" />
              <Corner $x={1220} $side="left" />
              <Line>Thanks for the watching.</Line>
              <Line> </Line>
              <Line>If you really like this tutorial, please donate.</Line>
            </Page>
          </DocRow>
        </Canvas>
        <VScroll>
          <ArrowSlot $h={16}><Chevron dir="up" /></ArrowSlot>
          <VTrack><VThumb /></VTrack>
          <ArrowSlot><Chevron dir="up" /></ArrowSlot>
          <ArrowSlot><Chevron dir="down" /></ArrowSlot>
          <PillButton $gap={5}><svg width="9" height="9"><path d="m4.500 0 4 4h-8zM4.500 4l4 4h-8z" fill="#111" /></svg></PillButton>
          <PillButton $gap={6}><svg width="9" height="9"><circle cx="4.500" cy="4.500" r="3.800" fill="#4f8db8" stroke="#1f4a69" /></svg></PillButton>
          <PillButton $gap={6}><svg width="9" height="9"><path d="m4.500 5-4-4h8zM4.500 9l-4-4h8z" fill="#111" /></svg></PillButton>
        </VScroll>
      </Work>

      <HScroll>
        <ArrowSlot $w={15}><Chevron dir="left" color="#9a9592" /></ArrowSlot>
        <HTrack><HThumb /></HTrack>
        <ArrowSlot $w={14}><Chevron dir="left" color="#9a9592" /></ArrowSlot>
        <ArrowSlot $w={14}><Chevron dir="right" /></ArrowSlot>
      </HScroll>

      <StatusBar>
        <StatusText $w={137} $ls={-0.2}>Page 10 / 10</StatusText>
        <StatusText $w={319} $ls={-0.17}>4322 words, 23904 characters</StatusText>
        <StatusText $w={170}>Default Style</StatusText>
        <StatusText $w={140}>English (USA)</StatusText>
        <StatusIcon $gap={58}>
          <svg width="14" height="18" viewBox="0 -1 14 18">
            <path d="M1 6h9v6H1z" fill="#85817e" />
            <path d="M9.500 4.500h4M9.500 13.500h4M11.500 4.500v9" stroke="#85817e" />
          </svg>
        </StatusIcon>
        <StatusIcon $gap={18}>
          <svg width="13" height="18" viewBox="0 -1 13 18">
            <path d="M8.500 5V2.500h-8v10h8V11" fill="none" stroke="#96918e" />
            <path d="M8.500 5v6M6 6.500l5 3M11 6.500l-5 3" stroke="#b71c1c" strokeWidth="1.400" />
          </svg>
        </StatusIcon>
        <StatusIcon $gap={220}>
          <svg width="207" height="18" viewBox="0 -1 207 18" fill="none">
            <path d="M3.500 4.500h4l3 3v6h-7zM7.500 4.500v3h3" stroke="#8b8784" />
            <path d="M17.500 4.500h4l3 3v6h-7zM21.500 4.500v3h3M27.500 4.500h4l3 3v6h-7zM31.500 4.500v3h3" stroke="#55514e" />
            <path d="M41.500 13.500v-6l3-3h4v9zM44.500 4.500v3h-3M49.500 4.500h4l3 3v6h-7zM53.500 4.500v3h3" stroke="#8b8784" />
            <path d="M78 9h8.500M196 9h8.500M200.500 5v8" stroke="#85817e" strokeWidth="2" />
            <path d="M92 9h98M107 4.500v9.500M140 4.500v9.500" stroke="#9a9592" strokeWidth="2" />
            <circle cx="146" cy="9" r="4" fill="#fff" stroke="#85807d" strokeWidth=".8" />
          </svg>
        </StatusIcon>
        <StatusIcon $gap={13}><StatusText $w={40} $ls={-0.2}>160%</StatusText></StatusIcon>
      </StatusBar>
    </Screen>
  );
}
